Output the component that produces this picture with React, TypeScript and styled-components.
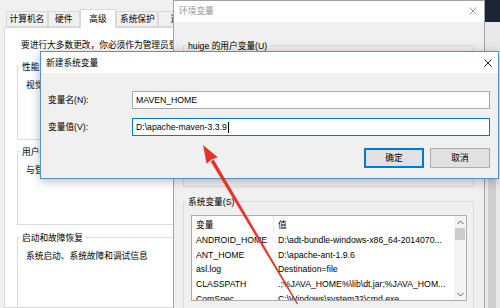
import React from "react";
import styled, { createGlobalStyle } from "styled-components";

const FONT = `"Liberation Sans", "Noto Sans CJK SC", sans-serif`;

const Global = createGlobalStyle`
  html, body { margin: 0; padding: 0; }
  body {
    width: 500px; height: 308px; overflow: hidden;
    font-family: ${FONT}; font-size: 8.7px; color: #000;
  }
  #root { width: 500px; height: 308px; }
`;

const Desktop = styled.div`
  position: relative;
  width: 500px;
  height: 308px;
  overflow: hidden;
  background: #1d2434;
`;

const Win = styled.div<{ $x: number; $y: number; $w: number; $h: number; $z: number }>`
  position: absolute;
  left: ${(p) => p.$x}px;
  top: ${(p) => p.$y}px;
  width: ${(p) => p.$w}px;
  height: ${(p) => p.$h}px;
  z-index: ${(p) => p.$z};
  box-sizing: border-box;
  display: flex;
  flex-direction: column;
  background: #f0f0f0;
  overflow: hidden;
`;

const BorderedWin = styled(Win)<{ $active?: boolean }>`
  border: 1px solid ${(p) => (p.$active ? "#4a95dc" : "#a3a3a3")};
  box-shadow: ${(p) => (p.$active ? "0 2px 10px rgba(0,0,0,0.28)" : "none")};
`;

/* ---------- system properties (back) ---------- */
const SysBody = styled.div`
  flex: 1;
  display: flex;
  flex-direction: column;
  padding: 9px 0 0 4px;
  min-height: 0;
`;

const TabStrip = styled.div`
  display: flex;
  align-items: flex-end;
  height: 18px;
  flex: none;
  padding-left: 2px;
`;

const Tab = styled.div<{ $w: number; $sel?: boolean }>`
  box-sizing: border-box;
  width: ${(p) => p.$w}px;
  height: ${(p) => (p.$sel ? 19 : 16)}px;
  margin-bottom: ${(p) => (p.$sel ? -1 : 0)}px;
  position: relative;
  z-index: ${(p) => (p.$sel ? 2 : 1)};
  display: flex;
  align-items: center;
  justify-content: center;
  white-space: nowrap;
  background: ${(p) => (p.$sel ? "#fff" : "#f0f0f0")};
  border: 1px solid #d9d9d9;
  border-bottom: ${(p) => (p.$sel ? "none" : "1px solid #d9d9d9")};
  line-height: 12px;
`;

const Panel = styled.div`
  flex: 1;
  display: block;
  background: #fff;
  border: 1px solid #d9d9d9;
  padding: 11px 0 0 12px;
  min-height: 0;
  overflow: hidden;
`;

const Line = styled.div<{ $indent?: number }>`
  line-height: 12px;
  height: 12px;
  white-space: nowrap;
  overflow: hidden;
  margin-left: ${(p) => p.$indent ?? 0}px;
`;

/* group box: bordered block whose caption sits on the top border */
const Group = styled.section<{ $mt: number }>`
  display: block;
  margin-top: ${(p) => p.$mt}px;
  border: 1px solid #dcdcdc;
`;

const GroupLabel = styled.div<{ $bg: string }>`
  width: fit-content;
  margin: -6px 0 0 2px;
  padding: 0 2px;
  line-height: 12px;
  height: 12px;
  white-space: nowrap;
  background: ${(p) => p.$bg};
`;

const GroupBody = styled.div<{ $h: number; $pad?: string }>`
  height: ${(p) => p.$h}px;
  padding: ${(p) => p.$pad ?? "6px 0 0 8px"};
  box-sizing: content-box;
  overflow: hidden;
`;

/* ---------- title bars ---------- */
const TitleBar = styled.div<{ $dim?: boolean; $h: number }>`
  height: ${(p) => p.$h}px;
  flex: none;
  background: #fff;
  display: flex;
  align-items: center;
  padding-left: 5px;
  color: ${(p) => (p.$dim ? "#9a9a9a" : "#000")};
`;

const TitleText = styled.div<{ $dy?: number }>`
  flex: 1;
  line-height: 12px;
  white-space: nowrap;
  position: relative;
  top: ${(p) => p.$dy ?? 0}px;
`;

const CloseBox = styled.div<{ $w: number; $dy?: number }>`
  width: ${(p) => p.$w}px;
  display: flex;
  justify-content: center;
  position: relative;
  top: ${(p) => p.$dy ?? 0}px;
`;

const CloseIcon = ({ color }: { color: string }) => (
  <svg width="8" height="8" viewBox="0 0 8 8">
    <path d="M0.5 0.5 L7.5 7.5 M7.5 0.5 L0.5 7.5" stroke={color} strokeWidth="0.9" fill="none" />
  </svg>
);

/* ---------- env vars ---------- */
const EnvBody = styled.div`
  flex: 1;
  display: block;
  padding: 23px 10px 0 9px;
  min-height: 0;
`;

const List = styled.div`
  height: 84px;
  background: #fff;
  border: 1px solid #abadb3;
  display: flex;
  overflow: hidden;
`;

const Table = styled.div`
  flex: 1;
  min-width: 0;
  display: flex;
  flex-direction: column;
`;

const Row = styled.div<{ $h: number }>`
  display: grid;
  grid-template-columns: 82px 1fr;
  height: ${(p) => p.$h}px;
  flex: none;
`;

const Cell = styled.div<{ $head?: boolean }>`
  box-sizing: border-box;
  padding-left: 4px;
  display: flex;
  align-items: center;
  white-space: nowrap;
  overflow: hidden;
  line-height: 12px;
  &:first-child {
    border-right: ${(p) => (p.$head ? "1px solid #e5e5e5" : "none")};
  }
`;

const ScrollBar = styled.div`
  width: 12px;
  flex: none;
  background: #f4f4f4;
  display: flex;
  flex-direction: column;
  align-items: center;
`;

const ScrollBtn = styled.div`
  height: 12px;
  width: 12px;
  display: flex;
  align-items: center;
  justify-content: center;
  flex: none;
`;

const Thumb = styled.div`
  width: 10px;
  height: 12px;
  background: #cdcdcd;
  flex: none;
`;

const Spacer = styled.div`
  flex: 1;
`;

const Chevron = ({ up }: { up?: boolean }) => (
  <svg width="7" height="5" viewBox="0 0 7 5">
    <path d={up ? "M0.5 4 L3.5 1 L6.5 4" : "M0.5 1 L3.5 4 L6.5 1"} stroke="#606060" strokeWidth="1" fill="none" />
  </svg>
);

/* ---------- far right window ---------- */
const SideWin = styled(Win)`
  border-left: 1px solid #d2d2d2;
  background: #e9e9e9;
  flex-direction: row;
  padding-left: 3px;
`;

const SideBar = styled.div`
  width: 8px;
  margin-top: 80px;
  background: #cfcfcf;
`;

/* ---------- new variable dialog ---------- */
const DlgBody = styled.div`
  flex: 1;
  padding: 18px 8px 0 7px;
  display: flex;
  flex-direction: column;
  gap: 9px;
`;

const FormRow = styled.div`
  display: flex;
  align-items: center;
  height: 18px;
  flex: none;
`;

const FieldLabel = styled.div`
  width: 84px;
  flex: none;
  line-height: 12px;
  white-space: nowrap;
`;

const Field = styled.div<{ $focus?: boolean }>`
  flex: 1;
  height: 18px;
  box-sizing: border-box;
  background: #fff;
  border: 1px solid ${(p) => (p.$focus ? "#0078d7" : "#a6a6a6")};
  padding-left: 3px;
  display: flex;
  align-items: center;
  white-space: nowrap;
  line-height: 12px;
`;

const Caret = styled.span`
  display: inline-block;
  width: 0;
  height: 11px;
  border-left: 1px solid #000;
  margin-left: 1px;
`;

const ButtonRow = styled.div`
  display: flex;
  justify-content: flex-end;
  gap: 6px;
  margin-top: 3px;
  flex: none;
`;

const Button = styled.div<{ $def?: boolean }>`
  width: 60px;
  height: 20px;
  box-sizing: border-box;
  background: #e1e1e1;
  border: 1px solid ${(p) => (p.$def ? "#0078d7" : "#adadad")};
  box-shadow: ${(p) => (p.$def ? "inset 0 0 0 1px #0078d7" : "none")};
  display: flex;
  align-items: center;
  justify-content: center;
  line-height: 12px;
`;

/* ---------- annotation arrow ---------- */
const Overlay = styled.svg`
  position: absolute;
  left: 0;
  top: 0;
  z-index: 10;
  pointer-events: none;
`;

function Arrow() {
  const tip = { x: 203, y: 145 };
  const tail = { x: 297.5, y: 304 };
  const dx = tail.x - tip.x;
  const dy = tail.y - tip.y;
  const len = Math.hypot(dx, dy);
  const u = { x: dx / len, y: dy / len };
  const n = { x: u.y, y: -u.x };
  const headLen = 18;
  const headHalf = 6.5;
  const b = { x: tip.x + u.x * headLen, y: tip.y + u.y * headLen };
  const p = (q: { x: number; y: number }, k: number) => `${(q.x + n.x * k).toFixed(2)},${(q.y + n.y * k).toFixed(2)}`;
  const shaft = [p(b, 1.8), p(tail, 0.7), p(tail, -0.7), p(b, -1.8)].join(" ");
  const bIn = { x: b.x - u.x * 1, y: b.y - u.y * 1 };
  const head = [`${tip.x},${tip.y}`, p(b, headHalf), p(bIn, 0), p(b, -headHalf)].join(" ");
  return (
    <Overlay width="500" height="308" viewBox="0 0 500 308">
      <polygon points={shaft} fill="#e8332b" />
      <polygon points={head} fill="#e8332b" />
    </Overlay>
  );
}

const tabs = [
  { t: "计算机名", w: 42 },
  { t: "硬件", w: 32 },
  { t: "高级", w: 37, sel: true },
  { t: "系统保护", w: 42 },
  { t: "远程", w: 42 },
];

const sysVars = [
  ["ANDROID_HOME", "D:\\adt-bundle-windows-x86_64-2014070..."],
  ["ANT_HOME", "D:\\apache-ant-1.9.6"],
  ["asl.log", "Destination=file"],
  ["CLASSPATH", ".;%JAVA_HOME%\\lib\\dt.jar;%JAVA_HOM..."],
  ["ComSpec", "C:\\Windows\\system32\\cmd.exe"],
];

export default function App() {
  return (
    <>
      <Global />
      <Desktop>
        {/* System properties */}
        <Win $x={0} $y={0} $w={200} $h={308} $z={1}>
          <SysBody>
            <TabStrip>
              {tabs.map((t) => (
                <Tab key={t.t} $w={t.w} $sel={t.sel}>
                  {t.t}
                </Tab>
              ))}
            </TabStrip>
            <Panel>
              <Line $indent={4}>要进行大多数更改，你必须作为管理员登录。</Line>
              <Group $mt={15}>
                <GroupLabel $bg="#fff">性能</GroupLabel>
                <GroupBody $h={60}>
                  <Line>视觉效果，处理器计划，内存使用，以及虚拟内存</Line>
                </GroupBody>
              </Group>
              <Group $mt={11}>
                <GroupLabel $bg="#fff">用户配置文件</GroupLabel>
                <GroupBody $h={60}>
                  <Line>与登录帐户相关的桌面设置</Line>
                </GroupBody>
              </Group>
              <Group $mt={12}>
                <GroupLabel $bg="#fff">启动和故障恢复</GroupLabel>
                <GroupBody $h={80}>
                  <Line>系统启动、系统故障和调试信息</Line>
                </GroupBody>
              </Group>
            </Panel>
          </SysBody>
        </Win>

        {/* Window at far right */}
        <SideWin $x={484} $y={22} $w={30} $h={300} $z={1}>
          <SideBar />
        </SideWin>

        {/* Environment variables */}
        <BorderedWin $x={173} $y={0} $w={312} $h={330} $z={2}>
          <TitleBar $dim $h={21}>
            <TitleText $dy={-1}>环境变量</TitleText>
            <CloseBox $w={22} $dy={-1}>
              <CloseIcon color="#8a8a8a" />
            </CloseBox>
          </TitleBar>
          <EnvBody>
            <Group $mt={0}>
              <GroupLabel $bg="#f0f0f0">huige 的用户变量(U)</GroupLabel>
              <GroupBody $h={134} $pad="0" />
            </Group>
            <Group $mt={14}>
              <GroupLabel $bg="#f0f0f0">系统变量(S)</GroupLabel>
              <GroupBody $h={120} $pad="7px 6px 0 7px">
                <List>
                  <Table>
                    <Row $h={17}>
                      <Cell $head>变量</Cell>
                      <Cell $head>值</Cell>
                    </Row>
                    {sysVars.map(([k, v]) => (
                      <Row key={k} $h={14.6}>
                        <Cell>{k}</Cell>
                        <Cell>{v}</Cell>
                      </Row>
                    ))}
                  </Table>
                  <ScrollBar>
                    <ScrollBtn>
                      <Chevron up />
                    </ScrollBtn>
                    <Thumb />
                    <Spacer />
                    <ScrollBtn>
                      <Chevron />
                    </ScrollBtn>
                  </ScrollBar>
                </List>
              </GroupBody>
            </Group>
          </EnvBody>
        </BorderedWin>

        {/* New system variable dialog */}
        <BorderedWin $active $x={40} $y={51} $w={459} $h={128} $z={3}>
          <TitleBar $h={21}>
            <TitleText>新建系统变量</TitleText>
            <CloseBox $w={20}>
              <CloseIcon color="#000" />
            </CloseBox>
          </TitleBar>
          <DlgBody>
            <FormRow>
              <FieldLabel>变量名(N):</FieldLabel>
              <Field>MAVEN_HOME</Field>
            </FormRow>
            <FormRow>
              <FieldLabel>变量值(V):</FieldLabel>
              <Field $focus>
                D:\apache-maven-3.3.9
                <Caret />
              </Field>
            </FormRow>
            <ButtonRow>
              <Button $def>确定</Button>
              <Button>取消</Button>
            </ButtonRow>
          </DlgBody>
        </BorderedWin>

        <Arrow />
      </Desktop>
    </>
  );
}
